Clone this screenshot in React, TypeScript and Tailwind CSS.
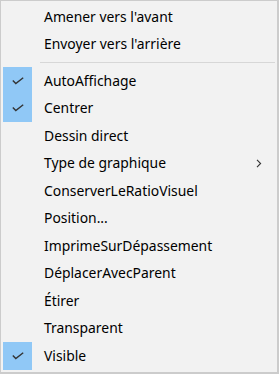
import { Fragment } from 'react';

type Item = { label: string; checked?: boolean; submenu?: boolean; sepBefore?: boolean };

const items: Item[] = [
  { label: "Amener vers l'avant" },
  { label: "Envoyer vers l'arrière" },
  { label: 'AutoAffichage', checked: true, sepBefore: true },
  { label: 'Centrer', checked: true },
  { label: 'Dessin direct' },
  { label: 'Type de graphique', submenu: true },
  { label: 'ConserverLeRatioVisuel' },
  { label: 'Position...' },
  { label: 'ImprimeSurDépassement' },
  { label: 'DéplacerAvecParent' },
  { label: 'Étirer' },
  { label: 'Transparent' },
  { label: 'Visible', checked: true },
];

function Check() {
  return (
    <svg width="12" height="8" viewBox="0 0 12 8" className="text-[#333]">
      <path d="M0.8 3.6 L3.8 6.6 L11.2 0.8" fill="none" stroke="currentColor" strokeWidth="1.4" />
    </svg>
  );
}

function Chevron() {
  return (
    <svg width="6" height="9" viewBox="0 0 6 9" className="text-[#333]">
      <path d="M1 0.8 L4.6 4.5 L1 8.2" fill="none" stroke="currentColor" strokeWidth="1.1" />
    </svg>
  );
}

export default function App() {
  return (
    <div className="w-[279px] h-[374px] bg-[#f2f2f2] border border-[#cccccc] border-r-2 border-b-2 pt-[2px] pl-[2px] pr-[1px] font-['Noto_Sans',sans-serif] text-[13.9px] text-black">
      {items.map((it, i) => (
        <Fragment key={i}>
          {it.sepBefore && (
            <div className="h-[9px] flex items-center pl-[37px] pr-[1px]">
              <div className="h-px w-full bg-[#d7d7d7]" />
            </div>
          )}
          <div className="h-[27.5px] flex items-center">
            <div
              className={`w-[29px] h-full flex items-center justify-center ${it.checked ? 'bg-[#90c8f6]' : ''}`}
            >
              {it.checked && <Check />}
            </div>
            <span className="pl-[12px] flex-1 whitespace-nowrap leading-none">{it.label}</span>
            {it.submenu && (
              <span className="pr-[14px] flex items-center">
                <Chevron />
              </span>
            )}
          </div>
        </Fragment>
      ))}
    </div>
  );
}
